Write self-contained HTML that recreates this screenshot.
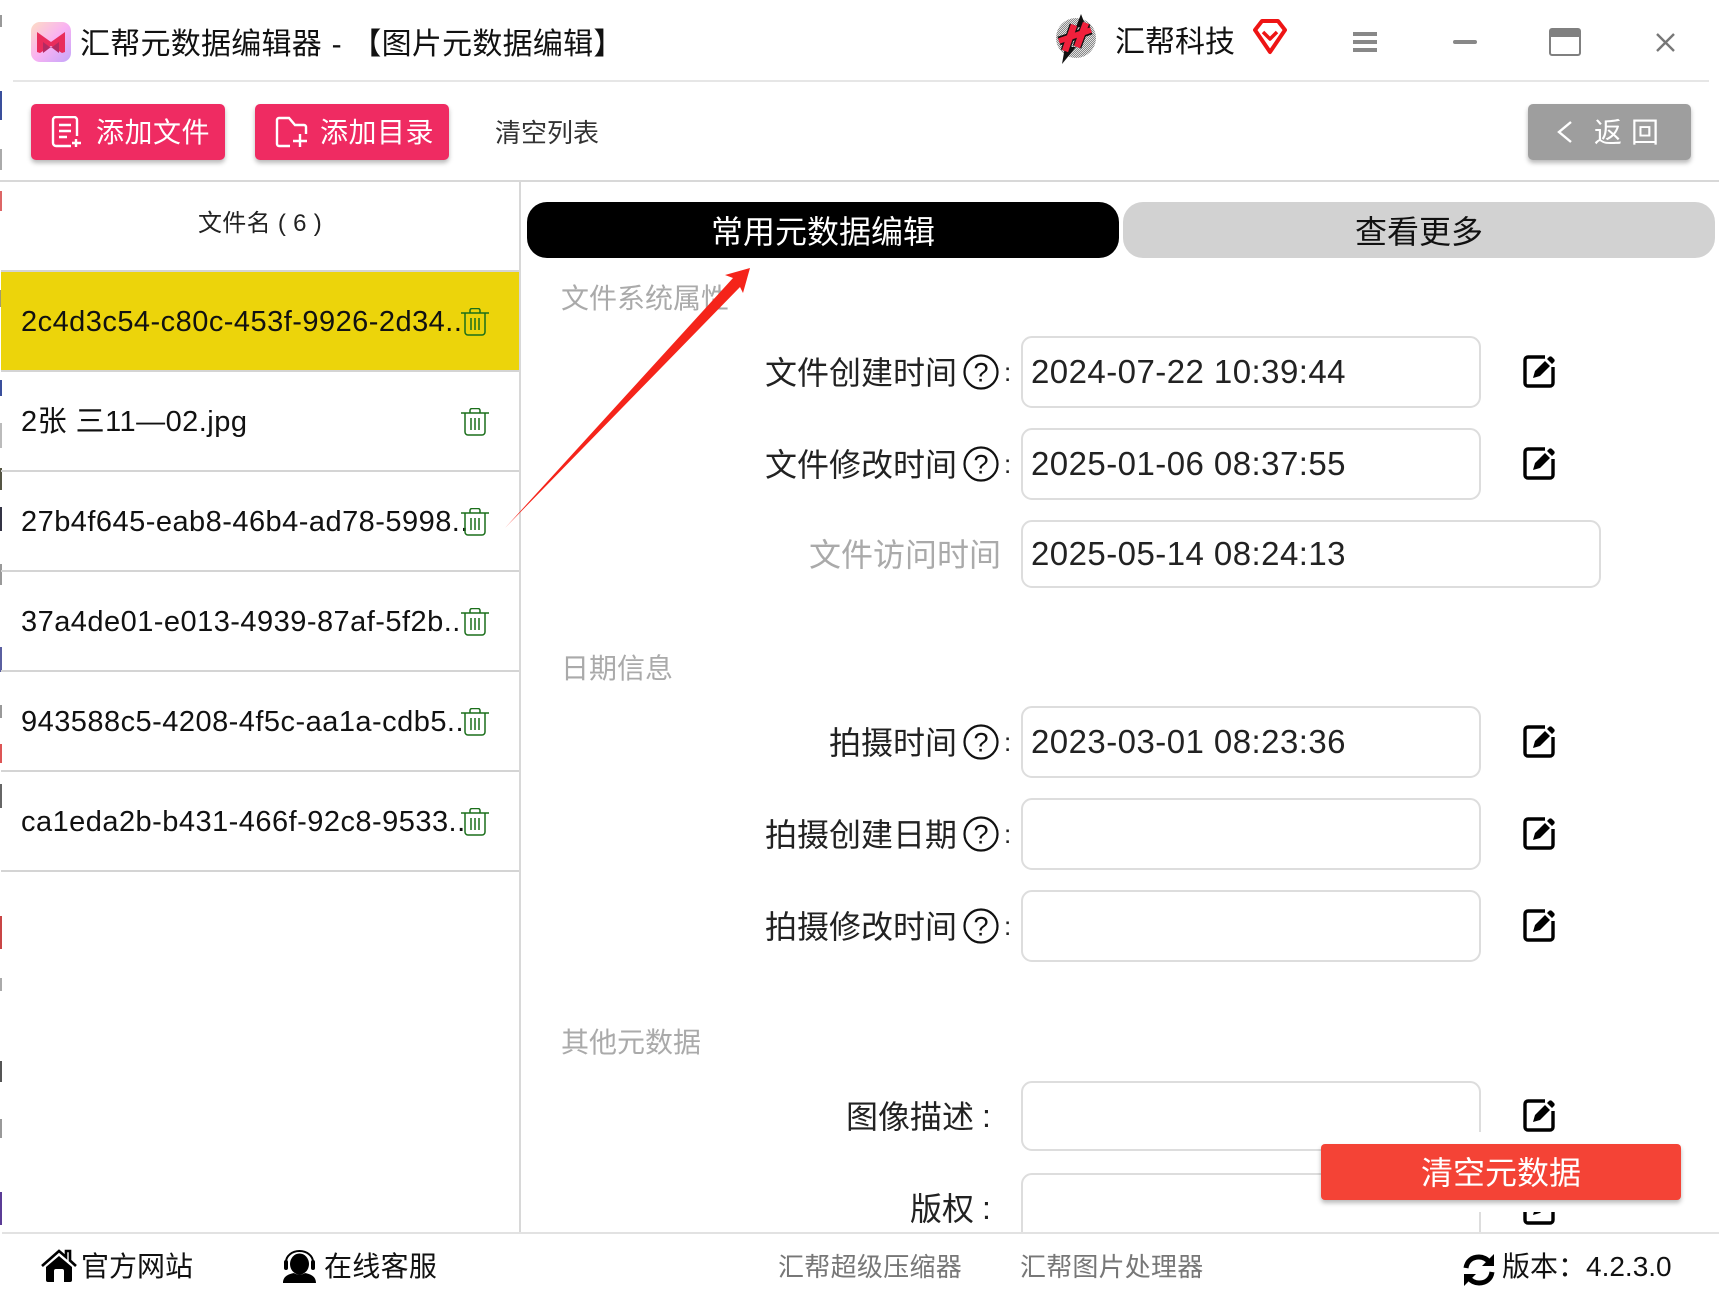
<!DOCTYPE html>
<html lang="zh"><head><meta charset="utf-8"><title>汇帮元数据编辑器</title>
<style>
html,body{margin:0;padding:0;background:#fff}
#p{position:relative;width:1719px;height:1299px;overflow:hidden;background:#fff;font-family:"Liberation Sans","Noto Sans CJK SC",sans-serif;color:#111}
#p div,#p span,#p svg{position:absolute}
.t{white-space:nowrap;height:40px;line-height:40px}
.l{font-size:32px;color:#222}
.g{color:#aaa}
.s{font-size:28px;color:#aaa;left:561px}
.v{font-size:33px;left:1031px;letter-spacing:.45px;color:#222}
.i{left:1021px;width:456px;border:2px solid #ddd;border-radius:11px;box-sizing:content-box;background:#fff}
.r{left:1px;width:518px;height:98px;border-bottom:2px solid #d4d4d4}
.n{font-size:29px;left:21px;color:#111;letter-spacing:.47px}
.b{background:#ef2b62;border-radius:5px;height:56px;top:104px;box-shadow:0 3px 5px rgba(0,0,0,.28)}
</style></head><body><div id="p">

<div style="left:0;top:15px;width:2px;height:12px;background:#999"></div>
<div style="left:0;top:91px;width:2px;height:29px;background:#3a4f9c"></div>
<div style="left:0;top:149px;width:2px;height:21px;background:#aaa"></div>
<div style="left:0;top:191px;width:2px;height:20px;background:#d66"></div>
<div style="left:0;top:290px;width:2px;height:17px;background:#a09a70"></div>
<div style="left:0;top:380px;width:2px;height:16px;background:#3a4f9c"></div>
<div style="left:0;top:423px;width:2px;height:25px;background:#bbb"></div>
<div style="left:0;top:468px;width:2px;height:22px;background:#554"></div>
<div style="left:0;top:507px;width:2px;height:24px;background:#334"></div>
<div style="left:0;top:564px;width:2px;height:21px;background:#999"></div>
<div style="left:0;top:647px;width:2px;height:25px;background:#5a5fa0"></div>
<div style="left:0;top:705px;width:2px;height:13px;background:#999"></div>
<div style="left:0;top:744px;width:2px;height:19px;background:#d55"></div>
<div style="left:0;top:784px;width:2px;height:24px;background:#666"></div>
<div style="left:0;top:916px;width:2px;height:33px;background:#c94545"></div>
<div style="left:0;top:978px;width:2px;height:13px;background:#aaa"></div>
<div style="left:0;top:1061px;width:2px;height:21px;background:#555"></div>
<div style="left:0;top:1119px;width:2px;height:19px;background:#999"></div>
<div style="left:0;top:1192px;width:2px;height:33px;background:#5b3c96"></div>
<div style="left:0;top:1254px;width:2px;height:19px;background:#999"></div>

<!-- title bar -->
<svg style="left:31px;top:22px" width="40" height="40" viewBox="0 0 40 40">
<defs><linearGradient id="lg" x1="0" y1="0" x2="1" y2="1"><stop offset="0" stop-color="#fddcc4"/><stop offset=".5" stop-color="#f9b2f2"/><stop offset="1" stop-color="#c4a6fa"/></linearGradient>
<pattern id="hp" width="2" height="2" patternUnits="userSpaceOnUse"><rect width="2" height="2" fill="#e0e0e0"/><rect width="1" height="1" fill="#888"/><rect x="1" y="1" width="1" height="1" fill="#888"/></pattern></defs>
<rect width="40" height="40" rx="9" fill="url(#lg)"/>
<path d="M6 10L20 20V24L9 31L6 30Z" fill="#e92c5c"/><path d="M34 10L20 20V24L31 31L34 30Z" fill="#e92c5c"/>
<path d="M12 20L20 26L28 20V31L20 25L12 31Z" fill="#b32a62"/></svg>
<span class="t" style="left:80px;top:25px;font-size:30px;color:#111;letter-spacing:.25px;word-spacing:1px">汇帮元数据编辑器 - 【图片元数据编辑】</span>
<svg style="left:1053px;top:14px" width="44" height="50" viewBox="0 0 44 50">
<circle cx="23" cy="24" r="20" fill="url(#hp)"/>
<path d="M28 0L23 13H33Z M9 50L23 33H12Z" fill="#111"/>
<g fill="none" stroke="#111" stroke-width="9"><path d="M21 11L12 37M33 9L24 33M6 27L38 16"/></g>
<g fill="none" stroke="#f0203c" stroke-width="6.5"><path d="M21 11L12 37M33 9L24 33"/><path d="M6 27L38 16" stroke-width="5.5"/></g></svg>
<span class="t" style="left:1115px;top:23px;font-size:30px;color:#111">汇帮科技</span>
<svg style="left:1252px;top:18px" width="36" height="37" viewBox="0 0 36 37" fill="none" stroke="#ee1414" stroke-width="4" stroke-linejoin="round">
<path d="M10 3H26L33 12L18 34L3 12Z"/><path d="M11 14L18 21L25 14" stroke-width="3.5"/></svg>
<svg style="left:1353px;top:32px" width="24" height="20"><rect width="24" height="4" fill="#888"/><rect y="8" width="24" height="4" fill="#888"/><rect y="16" width="24" height="4" fill="#888"/></svg>
<div style="left:1453px;top:40px;width:24px;height:4px;border-radius:2px;background:#888"></div>
<svg style="left:1549px;top:28px" width="32" height="28"><rect x="1" y="1" width="30" height="26" rx="2" fill="#fff" stroke="#808080" stroke-width="2"/><rect x="1" y="1" width="30" height="8" fill="#808080"/></svg>
<svg style="left:1655px;top:32px" width="21" height="21" fill="none" stroke="#777" stroke-width="2.4"><path d="M2 2L19 19M19 2L2 19"/></svg>
<div style="left:13px;top:80px;width:1696px;height:2px;background:#e6e6e6"></div>

<!-- toolbar -->
<div class="b" style="left:31px;width:194px"></div>
<svg style="left:51px;top:116px" width="32" height="32" viewBox="0 0 32 32" fill="none" stroke="#fff" stroke-width="2.4"><path d="M20 30H5a3 3 0 0 1-3-3V4a3 3 0 0 1 3-3h18a3 3 0 0 1 3 3V20"/><path d="M8 9H20M8 15H20M8 21H16M25 23V31M21 27H30"/></svg>
<span class="t" style="left:96px;top:113px;font-size:28px;color:#fff;letter-spacing:.5px">添加文件</span>
<div class="b" style="left:255px;width:194px"></div>
<svg style="left:275px;top:116px" width="33" height="32" viewBox="0 0 33 32" fill="none" stroke="#fff" stroke-width="2.4"><path d="M15 30H4a2 2 0 0 1-2-2V4a2 2 0 0 1 2-2H14l6 7H29a2 2 0 0 1 2 2V18"/><path d="M25 18V31M18 25H32"/></svg>
<span class="t" style="left:320px;top:113px;font-size:28px;color:#fff;letter-spacing:.5px">添加目录</span>
<span class="t" style="left:495px;top:113px;font-size:26px;color:#333">清空列表</span>
<div class="b" style="left:1528px;width:163px;background:#9e9e9e"></div>
<svg style="left:1556px;top:120px" width="17" height="24" fill="none" stroke="#fff" stroke-width="2.4"><path d="M15 2L3 12L15 22"/></svg>
<span class="t" style="left:1594px;top:113px;font-size:28px;color:#fff;letter-spacing:9px">返回</span>
<div style="left:0;top:180px;width:1719px;height:2px;background:#d8d8d8"></div>

<!-- sidebar -->
<div style="left:519px;top:182px;width:2px;height:1051px;background:#d8d8d8"></div>
<span class="t" style="left:198px;top:204px;font-size:24px;color:#222;letter-spacing:.3px">文件名 ( 6 )</span>
<div style="left:1px;top:270px;width:518px;height:2px;background:#d4d4d4"></div>
<div class="r" style="top:272px;background:#ecd40b"></div>
<div class="r" style="top:372px"></div>
<div class="r" style="top:472px"></div>
<div class="r" style="top:572px"></div>
<div class="r" style="top:672px"></div>
<div class="r" style="top:772px"></div>
<span class="t n" style="top:302px">2c4d3c54-c80c-453f-9926-2d34..</span>
<span class="t n" style="top:402px">2张 三11—02.jpg</span>
<span class="t n" style="top:502px">27b4f645-eab8-46b4-ad78-5998..</span>
<span class="t n" style="top:602px">37a4de01-e013-4939-87af-5f2b..</span>
<span class="t n" style="top:702px">943588c5-4208-4f5c-aa1a-cdb5..</span>
<span class="t n" style="top:802px">ca1eda2b-b431-466f-92c8-9533..</span>
<svg style="left:461px;top:308px" width="28" height="28" viewBox="0 0 28 28" fill="none" stroke="#1a6e1a" stroke-width="1.5"><path d="M0 5H28M9 5V2.5a2 2 0 0 1 2-2h6a2 2 0 0 1 2 2V5M4 5V24a3 3 0 0 0 3 3H21a3 3 0 0 0 3-3V5M10 10V22M14 10V22M18 10V22"/></svg>
<svg style="left:461px;top:408px" width="28" height="28" viewBox="0 0 28 28" fill="none" stroke="#1a6e1a" stroke-width="1.5"><path d="M0 5H28M9 5V2.5a2 2 0 0 1 2-2h6a2 2 0 0 1 2 2V5M4 5V24a3 3 0 0 0 3 3H21a3 3 0 0 0 3-3V5M10 10V22M14 10V22M18 10V22"/></svg>
<svg style="left:461px;top:508px" width="28" height="28" viewBox="0 0 28 28" fill="none" stroke="#1a6e1a" stroke-width="1.5"><path d="M0 5H28M9 5V2.5a2 2 0 0 1 2-2h6a2 2 0 0 1 2 2V5M4 5V24a3 3 0 0 0 3 3H21a3 3 0 0 0 3-3V5M10 10V22M14 10V22M18 10V22"/></svg>
<svg style="left:461px;top:608px" width="28" height="28" viewBox="0 0 28 28" fill="none" stroke="#1a6e1a" stroke-width="1.5"><path d="M0 5H28M9 5V2.5a2 2 0 0 1 2-2h6a2 2 0 0 1 2 2V5M4 5V24a3 3 0 0 0 3 3H21a3 3 0 0 0 3-3V5M10 10V22M14 10V22M18 10V22"/></svg>
<svg style="left:461px;top:708px" width="28" height="28" viewBox="0 0 28 28" fill="none" stroke="#1a6e1a" stroke-width="1.5"><path d="M0 5H28M9 5V2.5a2 2 0 0 1 2-2h6a2 2 0 0 1 2 2V5M4 5V24a3 3 0 0 0 3 3H21a3 3 0 0 0 3-3V5M10 10V22M14 10V22M18 10V22"/></svg>
<svg style="left:461px;top:808px" width="28" height="28" viewBox="0 0 28 28" fill="none" stroke="#1a6e1a" stroke-width="1.5"><path d="M0 5H28M9 5V2.5a2 2 0 0 1 2-2h6a2 2 0 0 1 2 2V5M4 5V24a3 3 0 0 0 3 3H21a3 3 0 0 0 3-3V5M10 10V22M14 10V22M18 10V22"/></svg>

<!-- tabs -->
<div style="left:527px;top:202px;width:592px;height:56px;background:#000;border-radius:20px"></div>
<span class="t" style="left:711px;top:212px;font-size:32px;color:#fff">常用元数据编辑</span>
<div style="left:1123px;top:202px;width:592px;height:56px;background:#d2d2d2;border-radius:20px"></div>
<span class="t" style="left:1355px;top:212px;font-size:32px;color:#111">查看更多</span>

<!-- form -->
<span class="t s" style="top:279px">文件系统属性</span>
<span class="t l" style="left:765px;top:353px">文件创建时间</span>
<span class="t l" style="left:765px;top:445px">文件修改时间</span>
<span class="t l g" style="left:809px;top:535px">文件访问时间</span>
<div class="i" style="top:336px;height:68px"></div>
<div class="i" style="top:428px;height:68px"></div>
<div class="i" style="top:520px;width:576px;height:64px"></div>
<span class="t v" style="top:352px">2024-07-22 10:39:44</span>
<span class="t v" style="top:444px">2025-01-06 08:37:55</span>
<span class="t v" style="top:534px">2025-05-14 08:24:13</span>

<span class="t s" style="top:649px">日期信息</span>
<span class="t l" style="left:829px;top:723px">拍摄时间</span>
<span class="t l" style="left:765px;top:815px">拍摄创建日期</span>
<span class="t l" style="left:765px;top:907px">拍摄修改时间</span>
<div class="i" style="top:706px;height:68px"></div>
<div class="i" style="top:798px;height:68px"></div>
<div class="i" style="top:890px;height:68px"></div>
<span class="t v" style="top:722px">2023-03-01 08:23:36</span>

<span class="t s" style="top:1023px">其他元数据</span>
<span class="t l" style="left:846px;top:1097px">图像描述</span><span class="t l" style="left:982px;top:1096px">:</span>
<span class="t l" style="left:910px;top:1189px">版权</span><span class="t l" style="left:982px;top:1188px">:</span>
<div class="i" style="top:1081px;height:66px"></div>
<div class="i" style="top:1173px;height:80px"></div>

<svg style="left:963px;top:354px" width="36" height="36" viewBox="0 0 36 36"><circle cx="18" cy="18" r="16.5" fill="none" stroke="#111" stroke-width="2.2"/><text x="18" y="27.5" text-anchor="middle" font-size="27" fill="#111">?</text></svg><span class="t l" style="left:1004px;top:352px;font-size:26px">:</span>
<svg style="left:963px;top:446px" width="36" height="36" viewBox="0 0 36 36"><circle cx="18" cy="18" r="16.5" fill="none" stroke="#111" stroke-width="2.2"/><text x="18" y="27.5" text-anchor="middle" font-size="27" fill="#111">?</text></svg><span class="t l" style="left:1004px;top:444px;font-size:26px">:</span>
<svg style="left:963px;top:724px" width="36" height="36" viewBox="0 0 36 36"><circle cx="18" cy="18" r="16.5" fill="none" stroke="#111" stroke-width="2.2"/><text x="18" y="27.5" text-anchor="middle" font-size="27" fill="#111">?</text></svg><span class="t l" style="left:1004px;top:722px;font-size:26px">:</span>
<svg style="left:963px;top:816px" width="36" height="36" viewBox="0 0 36 36"><circle cx="18" cy="18" r="16.5" fill="none" stroke="#111" stroke-width="2.2"/><text x="18" y="27.5" text-anchor="middle" font-size="27" fill="#111">?</text></svg><span class="t l" style="left:1004px;top:814px;font-size:26px">:</span>
<svg style="left:963px;top:908px" width="36" height="36" viewBox="0 0 36 36"><circle cx="18" cy="18" r="16.5" fill="none" stroke="#111" stroke-width="2.2"/><text x="18" y="27.5" text-anchor="middle" font-size="27" fill="#111">?</text></svg><span class="t l" style="left:1004px;top:906px;font-size:26px">:</span>

<svg style="left:1523px;top:355px" width="33" height="34" viewBox="0 0 33 34"><path d="M22 2H5a3 3 0 0 0-3 3V28a3 3 0 0 0 3 3H27a3 3 0 0 0 3-3V12" fill="none" stroke="#000" stroke-width="3.4"/><path d="M10 23L12 16L22 6L27 11L17 21Z M24 4L26 2a2 2 0 0 1 3 0L31 4a2 2 0 0 1 0 3L29 9Z" fill="#000"/></svg>
<svg style="left:1523px;top:447px" width="33" height="34" viewBox="0 0 33 34"><path d="M22 2H5a3 3 0 0 0-3 3V28a3 3 0 0 0 3 3H27a3 3 0 0 0 3-3V12" fill="none" stroke="#000" stroke-width="3.4"/><path d="M10 23L12 16L22 6L27 11L17 21Z M24 4L26 2a2 2 0 0 1 3 0L31 4a2 2 0 0 1 0 3L29 9Z" fill="#000"/></svg>
<svg style="left:1523px;top:725px" width="33" height="34" viewBox="0 0 33 34"><path d="M22 2H5a3 3 0 0 0-3 3V28a3 3 0 0 0 3 3H27a3 3 0 0 0 3-3V12" fill="none" stroke="#000" stroke-width="3.4"/><path d="M10 23L12 16L22 6L27 11L17 21Z M24 4L26 2a2 2 0 0 1 3 0L31 4a2 2 0 0 1 0 3L29 9Z" fill="#000"/></svg>
<svg style="left:1523px;top:817px" width="33" height="34" viewBox="0 0 33 34"><path d="M22 2H5a3 3 0 0 0-3 3V28a3 3 0 0 0 3 3H27a3 3 0 0 0 3-3V12" fill="none" stroke="#000" stroke-width="3.4"/><path d="M10 23L12 16L22 6L27 11L17 21Z M24 4L26 2a2 2 0 0 1 3 0L31 4a2 2 0 0 1 0 3L29 9Z" fill="#000"/></svg>
<svg style="left:1523px;top:909px" width="33" height="34" viewBox="0 0 33 34"><path d="M22 2H5a3 3 0 0 0-3 3V28a3 3 0 0 0 3 3H27a3 3 0 0 0 3-3V12" fill="none" stroke="#000" stroke-width="3.4"/><path d="M10 23L12 16L22 6L27 11L17 21Z M24 4L26 2a2 2 0 0 1 3 0L31 4a2 2 0 0 1 0 3L29 9Z" fill="#000"/></svg>
<svg style="left:1523px;top:1099px" width="33" height="34" viewBox="0 0 33 34"><path d="M22 2H5a3 3 0 0 0-3 3V28a3 3 0 0 0 3 3H27a3 3 0 0 0 3-3V12" fill="none" stroke="#000" stroke-width="3.4"/><path d="M10 23L12 16L22 6L27 11L17 21Z M24 4L26 2a2 2 0 0 1 3 0L31 4a2 2 0 0 1 0 3L29 9Z" fill="#000"/></svg>
<svg style="left:1523px;top:1192px" width="33" height="34" viewBox="0 0 33 34"><path d="M22 2H5a3 3 0 0 0-3 3V28a3 3 0 0 0 3 3H27a3 3 0 0 0 3-3V12" fill="none" stroke="#000" stroke-width="3.4"/><path d="M10 23L12 16L22 6L27 11L17 21Z M24 4L26 2a2 2 0 0 1 3 0L31 4a2 2 0 0 1 0 3L29 9Z" fill="#000"/></svg>

<div style="left:1321px;top:1132px;width:360px;height:80px;background:#fff"></div>
<div style="left:1321px;top:1144px;width:360px;height:56px;background:#f44336;border-radius:4px;box-shadow:0 3px 5px rgba(0,0,0,.28)"></div>
<span class="t" style="left:1421px;top:1153px;font-size:32px;color:#fff">清空元数据</span>

<!-- arrow -->
<svg style="left:500px;top:260px" width="260" height="272" viewBox="500 260 260 272"><path d="M505 528L733 278L725 275L750 268L743 293L740 287Z" fill="#f5241a" stroke="none"/></svg>

<!-- footer -->
<div style="left:0;top:1234px;width:1719px;height:65px;background:#fff"></div>
<div style="left:2px;top:1232px;width:1717px;height:2px;background:#e2e2e2"></div>
<svg style="left:41px;top:1249px" width="36" height="34" viewBox="0 0 36 34"><path d="M1 17L18 2L25 8V2H29V11.5L35 17" fill="none" stroke="#000" stroke-width="2.6"/><path d="M5 18L18 7L31 18V31a2 2 0 0 1-2 2H23V22a2 2 0 0 0-2-2H15a2 2 0 0 0-2 2V33H7a2 2 0 0 1-2-2Z" fill="#000"/></svg>
<span class="t" style="left:81px;top:1247px;font-size:28px;color:#111">官方网站</span>
<svg style="left:283px;top:1250px" width="33" height="33" viewBox="0 0 33 33"><path d="M3 15V12a13.5 11 0 0 1 27 0V15" fill="none" stroke="#000" stroke-width="2"/><rect x="1" y="10" width="4" height="10" rx="2" fill="#000"/><rect x="28" y="10" width="4" height="10" rx="2" fill="#000"/><ellipse cx="16.5" cy="14" rx="9.5" ry="10.5" fill="#000"/><path d="M0 33C0 26 6 24 11 23C13 25 20 25 22 23C27 24 33 26 33 33Z" fill="#000"/></svg>
<span class="t" style="left:324px;top:1247px;font-size:28px;color:#111;letter-spacing:.3px">在线客服</span>
<span class="t" style="left:778px;top:1247px;font-size:26px;color:#777;letter-spacing:.3px">汇帮超级压缩器</span>
<span class="t" style="left:1020px;top:1247px;font-size:26px;color:#777;letter-spacing:.2px">汇帮图片处理器</span>
<svg style="left:1463px;top:1253px" width="32" height="34" viewBox="0 0 32 34" fill="none" stroke="#000" stroke-width="5"><path d="M3 15C4 8 9 4 16 4C20 4 24 6 26 9"/><path d="M29 19C28 26 23 30 16 30C12 30 8 28 6 25"/><path d="M31 1V13H19Z M1 33V21H13Z" fill="#000" stroke="none"/></svg>
<span class="t" style="left:1502px;top:1247px;font-size:28px;color:#111">版本：</span>
<span class="t" style="left:1586px;top:1247px;font-size:28px;color:#111">4.2.3.0</span>
</div></body></html>
